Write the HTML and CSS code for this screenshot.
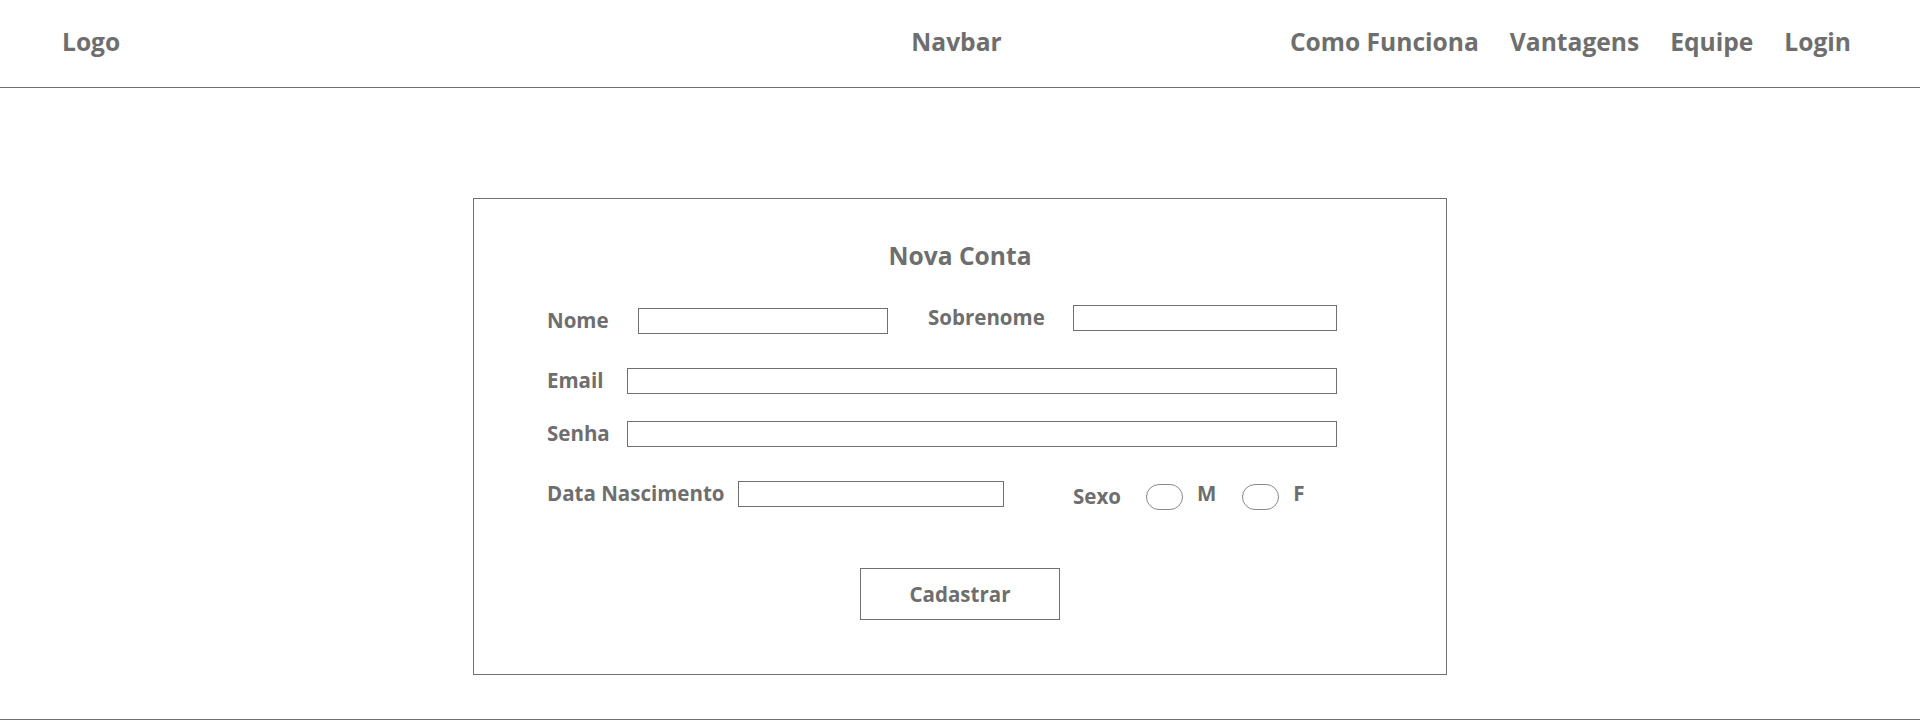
FILE: index.html
```html
<!DOCTYPE html>
<html lang="pt-BR">
<head>
<meta charset="utf-8">
<title>Nova Conta</title>
<link rel="stylesheet" href="styles.css">
</head>
<body>
<header class="topbar">
  <div class="brand">Logo</div>
  <div class="title">Navbar</div>
  <nav class="menu">
    <a href="#">Como Funciona</a>
    <a href="#">Vantagens</a>
    <a href="#">Equipe</a>
    <a href="#">Login</a>
  </nav>
</header>

<main class="stage">
  <form class="card">
    <h1 class="card-title">Nova Conta</h1>

    <div class="row row-tall">
      <div class="group group-low">
        <label class="lbl lbl-nome">Nome</label>
        <input class="field field-nome" type="text">
      </div>
      <div class="group group-high">
        <label class="lbl lbl-sobrenome">Sobrenome</label>
        <input class="field field-sobrenome" type="text">
      </div>
    </div>

    <div class="row row-email">
      <div class="group">
        <label class="lbl lbl-email">Email</label>
        <input class="field field-wide" type="text">
      </div>
    </div>

    <div class="row row-senha">
      <div class="group">
        <label class="lbl lbl-email">Senha</label>
        <input class="field field-wide" type="password">
      </div>
    </div>

    <div class="row row-tall row-birth">
      <div class="group group-high">
        <label class="lbl lbl-data">Data Nascimento</label>
        <input class="field field-data" type="text">
      </div>
      <div class="group group-low sexo">
        <span class="lbl lbl-sexo">Sexo</span>
        <span class="radio"></span>
        <span class="opt">M</span>
        <span class="radio"></span>
        <span class="opt">F</span>
      </div>
    </div>

    <div class="actions">
      <button type="button" class="btn">Cadastrar</button>
    </div>
  </form>
</main>

<footer class="foot"></footer>
</body>
</html>
```

FILE: styles.css
```css
* { box-sizing: border-box; }

html, body {
  margin: 0;
  padding: 0;
  background: #ffffff;
  color: #6e6e6e;
  font-family: "Open Sans", "Liberation Sans", sans-serif;
  font-weight: 700;
}

body {
  height: 720px;
  overflow: hidden;
}

.topbar {
  display: grid;
  grid-template-columns: 1fr auto 1fr;
  align-items: start;
  height: 88px;
  padding: 25px 69px 0 62px;
  border-bottom: 1px solid #707070;
  font-size: 24.6px;
  line-height: 34px;
}

.brand { justify-self: start; }
.title { justify-self: center; }

.menu {
  justify-self: end;
  display: flex;
  gap: 31px;
}

.menu a {
  color: #6e6e6e;
  text-decoration: none;
}

.stage {
  display: flex;
  justify-content: center;
  padding-top: 110px;
  height: 631px;
}

.card {
  width: 974px;
  height: 477px;
  border: 1px solid #707070;
  padding: 40px 0 54px 73px;
  display: flex;
  flex-direction: column;
  align-items: flex-start;
}

.card-title {
  margin: 0;
  align-self: stretch;
  margin-left: -73px;
  text-align: center;
  font-size: 24.6px;
  line-height: 33px;
  font-weight: 700;
}

.row {
  display: flex;
  height: 29px;
}

.row-tall {
  height: 32px;
  margin-top: 31px;
}

.row-email { margin-top: 31px; }
.row-senha { margin-top: 24px; }
.row-birth { margin-top: 31px; }

.group {
  display: flex;
  align-items: center;
  height: 29px;
}

.group-low { align-self: flex-end; }
.group-high { align-self: flex-start; }

.lbl {
  font-size: 20.5px;
  line-height: 29px;
  white-space: nowrap;
}

.lbl-nome { width: 91px; }
.lbl-sobrenome { width: 145px; margin-left: 40px; }
.lbl-email { width: 80px; }
.lbl-data { width: 191px; }
.lbl-sexo { width: 73px; margin-left: 69px; }

.field {
  height: 26px;
  border: 1px solid #707070;
  border-radius: 0;
  background: #ffffff;
  padding: 0 6px;
  font: inherit;
  outline: none;
}

.field-nome { width: 250px; }
.field-sobrenome { width: 264px; }
.field-wide { width: 710px; }
.field-data { width: 266px; }

.radio {
  display: block;
  width: 37px;
  height: 26px;
  border: 1px solid #8a8a8a;
  border-radius: 13px;
}

.opt {
  font-size: 20.5px;
  line-height: 29px;
  margin-left: 14px;
  margin-right: 26px;
  align-self: flex-start;
  margin-top: -3px;
}

.actions {
  align-self: stretch;
  margin-left: -73px;
  margin-top: 57px;
  display: flex;
  justify-content: center;
}

.btn {
  width: 200px;
  height: 52px;
  border: 1px solid #707070;
  background: #ffffff;
  color: #6e6e6e;
  font-family: "Open Sans", "Liberation Sans", sans-serif;
  font-weight: 700;
  font-size: 20.5px;
  padding: 0;
  cursor: pointer;
}

.foot {
  height: 1px;
  border-top: 1px solid #707070;
}
```
